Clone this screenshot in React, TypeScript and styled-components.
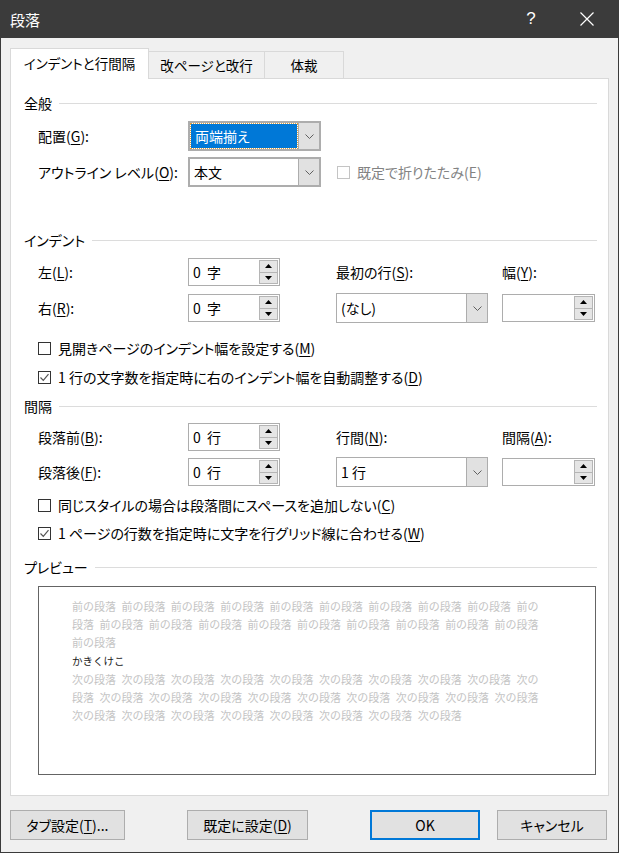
import React from "react";
import styled, { createGlobalStyle } from "styled-components";

const GlobalStyle = createGlobalStyle`
  html, body { margin: 0; padding: 0; background: #f0f0f0; }
  body {
    font-family: "Noto Sans CJK JP", "Noto Sans", sans-serif;
    font-size: 14px;
    color: #000;
    font-feature-settings: "palt";
  }
  * { box-sizing: border-box; }
`;

const Window = styled.div`
  width: 619px;
  height: 853px;
  border: 1px solid #3b3b3b;
  border-top: none;
  background: #f0f0f0;
  display: flex;
  flex-direction: column;
`;

const TitleBar = styled.div`
  height: 38px;
  flex: none;
  background: #3b3b3b;
  color: #fff;
  display: flex;
  align-items: center;
  padding: 0 11px 0 9px;
  font-size: 15px;
`;

const TitleText = styled.div`
  flex: 1;
`;

const TitleButton = styled.div<{ $ml?: number }>`
  width: 40px;
  height: 38px;
  margin-left: ${(p) => p.$ml ?? 0}px;
  display: flex;
  align-items: center;
  justify-content: center;
  font-family: "Liberation Sans", sans-serif;
  font-size: 17px;
`;

const Body = styled.div`
  padding: 10px 9px 0 9px;
  display: flex;
  flex-direction: column;
`;

const TabRow = styled.div`
  display: flex;
  align-items: flex-end;
  height: 30px;
`;

const Tab = styled.div<{ $w: number; $active?: boolean }>`
  width: ${(p) => p.$w}px;
  height: ${(p) => (p.$active ? 31 : 27)}px;
  margin-bottom: ${(p) => (p.$active ? -1 : 0)}px;
  margin-left: ${(p) => (p.$active ? 0 : -1)}px;
  position: relative;
  z-index: ${(p) => (p.$active ? 1 : 0)};
  background: ${(p) => (p.$active ? "#fff" : "#f0f0f0")};
  border: 1px solid #d9d9d9;
  border-bottom: none;
  display: flex;
  align-items: center;
  justify-content: center;
  font-size: 13.5px;
  padding-bottom: ${(p) => (p.$active ? 2 : 0)}px;
  &:first-child { margin-left: 0; }
`;

const Panel = styled.div`
  background: #fff;
  border: 1px solid #d9d9d9;
  padding: 0 11px 20px 13px;
  display: flex;
  flex-direction: column;
`;

const SectionHead = styled.div<{ $mt: number }>`
  display: flex;
  align-items: center;
  height: 20px;
  margin-top: ${(p) => p.$mt}px;
  &::after {
    content: "";
    flex: 1;
    height: 1px;
    background: #dcdcdc;
    margin-left: 7px;
  }
`;

const GeneralGrid = styled.div`
  display: grid;
  grid-template-columns: 150px 149px auto;
  grid-auto-rows: 30px;
  row-gap: 6px;
  align-items: center;
  margin: 8px 0 0 14px;
`;

const FieldGrid = styled.div<{ $mt: number; $gap: number }>`
  display: grid;
  grid-template-columns: 150px 148px 166px 93px;
  grid-auto-rows: 28px;
  row-gap: ${(p) => p.$gap}px;
  align-items: center;
  margin: ${(p) => p.$mt}px 0 0 14px;
`;

const Label = styled.div<{ $disabled?: boolean }>`
  white-space: nowrap;
  color: ${(p) => (p.$disabled ? "#838383" : "#000")};
`;

const Key = styled.span`
  text-decoration: underline;
  text-underline-offset: 2px;
`;

const SelectBox = styled.div<{ $w: number; $thick?: boolean }>`
  width: ${(p) => p.$w}px;
  height: 30px;
  border: ${(p) => (p.$thick ? 2 : 1)}px solid #adadad;
  background: #fff;
  display: flex;
`;

const SelectValue = styled.div<{ $selected?: boolean }>`
  flex: 1;
  display: flex;
  align-items: center;
  padding-left: 4px;
  margin: ${(p) => (p.$selected ? "1px" : "0")};
  background: ${(p) => (p.$selected ? "#0078d7" : "transparent")};
  color: ${(p) => (p.$selected ? "#fff" : "#000")};
  outline: ${(p) => (p.$selected ? "1px dotted #e0a040" : "none")};
  white-space: nowrap;
`;

const SelectArrow = styled.div`
  width: 21px;
  background: #e1e1e1;
  border-left: 1px solid #adadad;
  display: flex;
  align-items: center;
  justify-content: center;
`;

const SpinBox = styled.div<{ $w: number }>`
  width: ${(p) => p.$w}px;
  height: 28px;
  border: 1px solid #adadad;
  background: #fff;
  display: flex;
  align-items: center;
  padding: 0 1px 0 4px;
`;

const SpinValue = styled.div`
  flex: 1;
  white-space: pre;
`;

const SpinButtons = styled.div`
  width: 19px;
  height: 24px;
  display: flex;
  flex-direction: column;
`;

const SpinButton = styled.div`
  flex: 1;
  background: #e5e5e5;
  border: 1px solid #b5b5b5;
  display: flex;
  align-items: center;
  justify-content: center;
  & + & { border-top: none; }
`;

const CheckRow = styled.div<{ $mt: number; $ml?: number; $disabled?: boolean }>`
  display: flex;
  align-items: center;
  height: 20px;
  gap: 7px;
  margin-top: ${(p) => p.$mt}px;
  margin-left: ${(p) => p.$ml ?? 14}px;
  color: ${(p) => (p.$disabled ? "#838383" : "#000")};
  white-space: nowrap;
`;

const CheckSquare = styled.span<{ $disabled?: boolean }>`
  width: 13px;
  height: 13px;
  flex: none;
  border: 1px solid ${(p) => (p.$disabled ? "#c4c4c4" : "#333")};
  background: #fff;
  display: flex;
  align-items: center;
  justify-content: center;
`;

const Preview = styled.div`
  margin: 9px 1px 0 14px;
  height: 189px;
  border: 1px solid #646464;
  background: #fff;
  padding: 10px 0 0 33px;
  font-size: 11px;
  line-height: 18.2px;
  color: #c4c4c4;
  font-feature-settings: normal;
`;

const PreviewLine = styled.div<{ $dark?: boolean }>`
  display: flex;
  gap: 5.4px;
  white-space: nowrap;
  height: 18.2px;
  color: ${(p) => (p.$dark ? "#1a1a1a" : "#c4c4c4")};
  font-size: ${(p) => (p.$dark ? 10.5 : 11)}px;
`;

const Footer = styled.div`
  display: flex;
  margin-top: 14px;
  height: 30px;
`;

const Button = styled.button<{ $w: number; $ml: number; $primary?: boolean }>`
  width: ${(p) => p.$w}px;
  margin-left: ${(p) => p.$ml}px;
  height: 30px;
  padding: 0;
  background: #e1e1e1;
  border: ${(p) => (p.$primary ? "2px solid #0078d7" : "1px solid #adadad")};
  font: inherit;
  color: #000;
  white-space: nowrap;
`;

const Chevron = () => (
  <svg width="9" height="5" viewBox="0 0 9 5">
    <path d="M0.5 0.5 L4.5 4.5 L8.5 0.5" fill="none" stroke="#606060" strokeWidth="1" />
  </svg>
);

const TriUp = () => (
  <svg width="7" height="4" viewBox="0 0 7 4">
    <path d="M0 4 L3.5 0 L7 4 Z" fill="#000" />
  </svg>
);

const TriDown = () => (
  <svg width="7" height="4" viewBox="0 0 7 4">
    <path d="M0 0 L7 0 L3.5 4 Z" fill="#000" />
  </svg>
);

const CloseIcon = () => (
  <svg width="14" height="14" viewBox="0 0 14 14">
    <path d="M0.5 0.5 L13.5 13.5 M13.5 0.5 L0.5 13.5" stroke="#fff" strokeWidth="1.2" />
  </svg>
);

const CheckMark = () => (
  <svg width="11" height="11" viewBox="0 0 11 11">
    <path d="M1.5 5.5 L4.3 8.3 L9.5 2.2" fill="none" stroke="#555" strokeWidth="1.2" />
  </svg>
);

const Select: React.FC<{ w: number; thick?: boolean; selected?: boolean; children: React.ReactNode }> = ({
  w,
  thick,
  selected,
  children,
}) => (
  <SelectBox $w={w} $thick={thick}>
    <SelectValue $selected={selected}>{children}</SelectValue>
    <SelectArrow>
      <Chevron />
    </SelectArrow>
  </SelectBox>
);

const Spin: React.FC<{ w: number; value?: string }> = ({ w, value }) => (
  <SpinBox $w={w}>
    <SpinValue>{value}</SpinValue>
    <SpinButtons>
      <SpinButton>
        <TriUp />
      </SpinButton>
      <SpinButton>
        <TriDown />
      </SpinButton>
    </SpinButtons>
  </SpinBox>
);

const Check: React.FC<{ mt: number; checked?: boolean; disabled?: boolean; ml?: number; children: React.ReactNode }> = ({
  mt,
  checked,
  disabled,
  ml,
  children,
}) => (
  <CheckRow $mt={mt} $ml={ml} $disabled={disabled}>
    <CheckSquare $disabled={disabled}>{checked && <CheckMark />}</CheckSquare>
    <span>{children}</span>
  </CheckRow>
);

const rep = (s: string, n: number) => Array.from({ length: n }, () => s);

const previewLines: { parts: string[]; dark?: boolean }[] = [
  { parts: [...rep("前の段落", 9), "前の"] },
  { parts: ["段落", ...rep("前の段落", 9)] },
  { parts: ["前の段落"] },
  { parts: ["かきくけこ"], dark: true },
  { parts: [...rep("次の段落", 9), "次の"] },
  { parts: ["段落", ...rep("次の段落", 9)] },
  { parts: rep("次の段落", 8) },
];

export default function App() {
  return (
    <>
      <GlobalStyle />
      <Window>
        <TitleBar>
          <TitleText>段落</TitleText>
          <TitleButton>?</TitleButton>
          <TitleButton $ml={16}>
            <CloseIcon />
          </TitleButton>
        </TitleBar>
        <Body>
          <TabRow>
            <Tab $w={139} $active>
              インデントと行間隔
            </Tab>
            <Tab $w={117}>改ページと改行</Tab>
            <Tab $w={80}>体裁</Tab>
          </TabRow>
          <Panel>
            <SectionHead $mt={14}>全般</SectionHead>
            <GeneralGrid>
              <Label>
                配置(<Key>G</Key>):
              </Label>
              <Select w={133} thick selected>
                両端揃え
              </Select>
              <div />
              <Label>
                アウトライン レベル(<Key>O</Key>):
              </Label>
              <Select w={133} thick>
                本文
              </Select>
              <Check mt={0} ml={0} disabled>
                既定で折りたたみ(E)
              </Check>
            </GeneralGrid>

            <SectionHead $mt={43}>インデント</SectionHead>
            <FieldGrid $mt={8} $gap={8}>
              <Label>
                左(<Key>L</Key>):
              </Label>
              <Spin w={92} value="0  字" />
              <Label>
                最初の行(<Key>S</Key>):
              </Label>
              <Label>
                幅(<Key>Y</Key>):
              </Label>
              <Label>
                右(<Key>R</Key>):
              </Label>
              <Spin w={92} value="0  字" />
              <Select w={152}>(なし)</Select>
              <Spin w={93} />
            </FieldGrid>
            <Check mt={16}>
              見開きページのインデント幅を設定する(<Key>M</Key>)
            </Check>
            <Check mt={9} checked>
              1 行の文字数を指定時に右のインデント幅を自動調整する(<Key>D</Key>)
            </Check>

            <SectionHead $mt={9}>間隔</SectionHead>
            <FieldGrid $mt={7} $gap={7}>
              <Label>
                段落前(<Key>B</Key>):
              </Label>
              <Spin w={92} value="0  行" />
              <Label>
                行間(<Key>N</Key>):
              </Label>
              <Label>
                間隔(<Key>A</Key>):
              </Label>
              <Label>
                段落後(<Key>F</Key>):
              </Label>
              <Spin w={92} value="0  行" />
              <Select w={152}>1 行</Select>
              <Spin w={93} />
            </FieldGrid>
            <Check mt={9}>
              同じスタイルの場合は段落間にスペースを追加しない(<Key>C</Key>)
            </Check>
            <Check mt={8} checked>
              1 ページの行数を指定時に文字を行グリッド線に合わせる(<Key>W</Key>)
            </Check>

            <SectionHead $mt={14}>プレビュー</SectionHead>
            <Preview>
              {previewLines.map((line, i) => (
                <PreviewLine key={i} $dark={line.dark}>
                  {line.parts.map((p, j) => (
                    <span key={j}>{p}</span>
                  ))}
                </PreviewLine>
              ))}
            </Preview>
          </Panel>
          <Footer>
            <Button $w={115} $ml={0}>
              タブ設定(<Key>T</Key>)...
            </Button>
            <Button $w={121} $ml={62}>
              既定に設定(<Key>D</Key>)
            </Button>
            <Button $w={110} $ml={62} $primary>
              OK
            </Button>
            <Button $w={110} $ml={17}>
              キャンセル
            </Button>
          </Footer>
        </Body>
      </Window>
    </>
  );
}
